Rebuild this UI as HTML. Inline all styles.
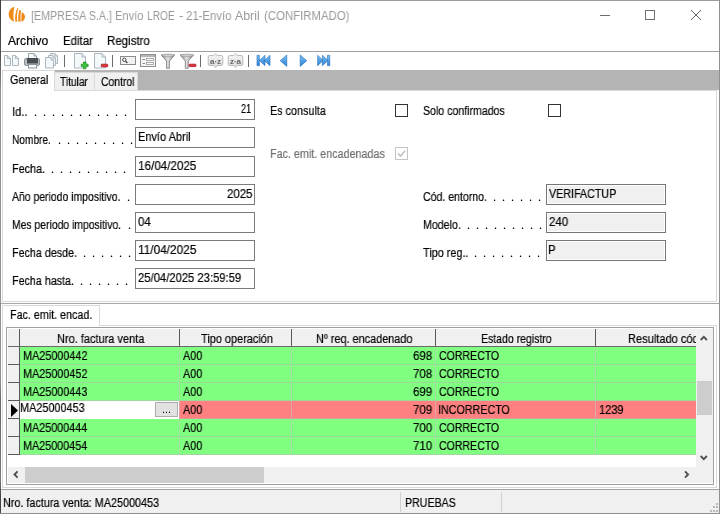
<!DOCTYPE html>
<html><head><meta charset="utf-8">
<style>
html,body{margin:0;padding:0;}
body{width:720px;height:514px;overflow:hidden;background:#fff;position:relative;font-family:"Liberation Sans",sans-serif;font-size:12.5px;color:#000;}
.a{position:absolute;}
.t{position:absolute;white-space:nowrap;transform-origin:0 0;line-height:16px;will-change:transform;-webkit-text-stroke:0.2px currentColor;}
</style></head><body>
<div class="a" style="left:0px;top:0px;width:720px;height:1px;background:#9b9b9b;"></div>
<div class="a" style="left:0px;top:0px;width:1px;height:514px;background:linear-gradient(#3c3c3c 0,#555 60px,#909090 90px,#909090 380px,#666 400px,#777 480px,#444 495px,#444 100%);"></div>
<div class="a" style="left:719px;top:0px;width:1px;height:514px;background:#8f8f8f;"></div>
<div class="a" style="left:0px;top:513px;width:720px;height:1px;background:#8f8f8f;"></div>
<svg class="a" style="left:6px;top:4px" width="22" height="20" viewBox="6 4 22 20">
<path d="M14.3 6.7 C10.4 8 8.5 11.5 8.7 14.8 C8.9 17.9 10.8 20.5 13.9 21.8 C13.2 17 13.3 11 14.3 6.7 Z" fill="#f08a16"/>
<path d="M17.5 7.7 C15.4 11.5 14.7 17 15.4 21.8 L17.3 21.6 C16.6 17 16.9 12 18.4 8.2 Z" fill="#f08a16"/>
<path d="M19.3 9.9 C18.2 13.5 18 18 18.4 21.8 L20.7 21.6 C20.4 18 20.5 13.5 21 10.2 Z" fill="#f08a16"/>
<path d="M21.9 11.9 C21.2 15 21.2 18.5 21.6 21.8 C23.6 20.9 25 19 25 16.8 C25 14.8 23.7 12.9 21.9 11.9 Z" fill="#f08a16"/>
</svg>
<div class="t" style="left:30.59px;top:8px;font-size:12px;transform:scaleX(0.8923);color:#999;-webkit-text-stroke:0;">[EMPRESA S.A.]</div>
<div class="t" style="left:115.08px;top:8px;font-size:12px;transform:scaleX(0.9247);color:#999;-webkit-text-stroke:0;">Envío</div>
<div class="t" style="left:147.45px;top:8px;font-size:12px;transform:scaleX(0.8462);color:#999;-webkit-text-stroke:0;">LROE</div>
<div class="t" style="left:178.65px;top:8px;font-size:12px;transform:scaleX(1.1000);color:#999;-webkit-text-stroke:0;">-</div>
<div class="t" style="left:186.13px;top:8px;font-size:12px;transform:scaleX(0.9489);color:#999;-webkit-text-stroke:0;">21-Envío</div>
<div class="t" style="left:235.30px;top:8px;font-size:12px;transform:scaleX(1.0302);color:#999;-webkit-text-stroke:0;">Abril</div>
<div class="t" style="left:263.54px;top:8px;font-size:12px;transform:scaleX(0.9492);color:#999;-webkit-text-stroke:0;">(CONFIRMADO)</div>
<div class="a" style="left:600px;top:15px;width:10px;height:1px;background:#6e6e6e;"></div>
<div class="a" style="left:645px;top:10px;width:10px;height:10px;border:1px solid #6e6e6e;box-sizing:border-box;"></div>
<svg class="a" style="left:690px;top:9px" width="12" height="12" viewBox="0 0 12 12"><path d="M1 1 L11 11 M11 1 L1 11" stroke="#666" stroke-width="1" fill="none"/></svg>
<div class="t" style="left:8.20px;top:33px;font-size:12px;transform:scaleX(1.0076);">Archivo</div>
<div class="t" style="left:63.25px;top:33px;font-size:12px;transform:scaleX(0.9536);">Editar</div>
<div class="t" style="left:106.84px;top:33px;font-size:12px;transform:scaleX(0.9583);">Registro</div>
<div class="a" style="left:1px;top:51px;width:718px;height:1px;background:#a0a0a0;"></div>
<svg class="a" style="left:0;top:52px;will-change:transform" width="340" height="18" viewBox="0 52 340 18"><defs><linearGradient id="gb" x1="0" y1="0" x2="0" y2="1"><stop offset="0" stop-color="#7cc2f6"/><stop offset="1" stop-color="#2a80d2"/></linearGradient><linearGradient id="gf" x1="0" y1="0" x2="1" y2="0"><stop offset="0" stop-color="#8a8a8a"/><stop offset=".5" stop-color="#e0e0e0"/><stop offset="1" stop-color="#808080"/></linearGradient><linearGradient id="gg" x1="0" y1="0" x2="0" y2="1"><stop offset="0" stop-color="#f6f6f6"/><stop offset="1" stop-color="#dcdcdc"/></linearGradient></defs><path d="M4.5 55.5 H7.5 L10.5 58.5 V65.5 H4.5 Z" fill="#f3f8fa" stroke="#acb7c0" stroke-width="1"/><path d="M7.5 55.5 V58.5 H10.5" fill="none" stroke="#acb7c0" stroke-width="1"/><path d="M12.5 55.5 H15.5 L18.5 58.5 V65.5 H12.5 Z" fill="#f3f8fa" stroke="#acb7c0" stroke-width="1"/><path d="M15.5 55.5 V58.5 H18.5" fill="none" stroke="#acb7c0" stroke-width="1"/><path d="M28.5 53.5 H34.0 L36.5 56.0 V59.5 H28.5 Z" fill="#f8fbfc" stroke="#9aa4ac" stroke-width="1"/><path d="M34.0 53.5 V56.0 H36.5" fill="none" stroke="#9aa4ac" stroke-width="1"/><rect x="24.5" y="58.5" width="15" height="7" rx="1.5" fill="#b9bec3" stroke="#8c9298"/><rect x="27" y="58" width="11" height="5.5" fill="#4a4d50"/><rect x="28.5" y="64.5" width="8" height="3.5" fill="#fbfdfe" stroke="#8c9298"/><path d="M50.5 53.5 H55.0 L57.5 56.0 V63.5 H50.5 Z" fill="#f3f8fa" stroke="#acb7c0" stroke-width="1"/><path d="M55.0 53.5 V56.0 H57.5" fill="none" stroke="#acb7c0" stroke-width="1"/><path d="M48.5 55.5 H53.0 L55.5 58.0 V65.5 H48.5 Z" fill="#f3f8fa" stroke="#acb7c0" stroke-width="1"/><path d="M53.0 55.5 V58.0 H55.5" fill="none" stroke="#acb7c0" stroke-width="1"/><path d="M45.5 57.5 H51.0 L53.5 60.0 V68.0 H45.5 Z" fill="#f3f8fa" stroke="#acb7c0" stroke-width="1"/><path d="M51.0 57.5 V60.0 H53.5" fill="none" stroke="#acb7c0" stroke-width="1"/><rect x="64" y="55" width="1" height="12" fill="#6e6e6e"/><rect x="112" y="55" width="1" height="12" fill="#6e6e6e"/><rect x="200" y="55" width="1" height="12" fill="#6e6e6e"/><rect x="248" y="55" width="1" height="12" fill="#6e6e6e"/><path d="M74.5 53.5 H82.0 L85.5 57.0 V68.0 H74.5 Z" fill="#f3f8fa" stroke="#acb7c0" stroke-width="1"/><path d="M82.0 53.5 V57.0 H85.5" fill="none" stroke="#acb7c0" stroke-width="1"/><path d="M83.5 62 h2.4 v2.2 h2.2 v2.4 h-2.2 v2.2 h-2.4 v-2.2 h-2.2 v-2.4 h2.2 z" fill="#3fc43f" stroke="#1f8f1f" stroke-width=".8"/><path d="M94.5 53.5 H102.0 L105.5 57.0 V68.0 H94.5 Z" fill="#f3f8fa" stroke="#acb7c0" stroke-width="1"/><path d="M102.0 53.5 V57.0 H105.5" fill="none" stroke="#acb7c0" stroke-width="1"/><rect x="101.2" y="64.2" width="6.6" height="2.6" rx=".8" fill="#e0343c" stroke="#a8141c" stroke-width=".8"/><rect x="120.5" y="56.5" width="15" height="8" fill="#f2f2f2" stroke="#8c8c8c"/><circle cx="124.3" cy="59.8" r="1.7" fill="#fff" stroke="#444" stroke-width="1"/><path d="M125.6 61.2 L127.4 63" stroke="#444" stroke-width="1.3"/><rect x="140.5" y="54.5" width="15" height="12" fill="#f4f4f4" stroke="#8f8f8f"/><rect x="141" y="55" width="14" height="2" fill="#b5b5b5"/><rect x="146.5" y="58.5" width="7" height="2" fill="#fff" stroke="#9a9a9a" stroke-width=".8"/><rect x="146.5" y="62.5" width="7" height="2" fill="#fff" stroke="#9a9a9a" stroke-width=".8"/><rect x="142.5" y="59" width="2.5" height="1" fill="#8a8a8a"/><rect x="142.5" y="63" width="2.5" height="1" fill="#8a8a8a"/><path d="M161.2 55 H174.7 L169.39999999999998 61 V68.3 H166.5 V61 Z" fill="url(#gf)" stroke="#7a7a7a" stroke-width=".8"/><ellipse cx="167.95" cy="55.2" rx="6.6" ry="1.1" fill="#d8d8d8" stroke="#8a8a8a" stroke-width=".6"/><path d="M180 55 H193.5 L188.2 61 V68.3 H185.3 V61 Z" fill="url(#gf)" stroke="#7a7a7a" stroke-width=".8"/><ellipse cx="186.75" cy="55.2" rx="6.6" ry="1.1" fill="#d8d8d8" stroke="#8a8a8a" stroke-width=".6"/><rect x="189" y="64.2" width="7" height="2.4" rx=".8" fill="#e0343c" stroke="#a8141c" stroke-width=".8"/><path d="M209.7 55.5 H213.7 L215.5 53.8 L217.3 55.5 H221.29999999999998 Q222.79999999999998 55.5 222.79999999999998 57 V64 Q222.79999999999998 65.5 221.29999999999998 65.5 H217.3 L215.5 67.4 L213.7 65.5 H209.7 Q208.2 65.5 208.2 64 V57 Q208.2 55.5 209.7 55.5 Z" fill="url(#gg)" stroke="#b4b4b4" stroke-width=".9"/><text x="215.5" y="63.6" font-family="Liberation Sans, sans-serif" font-size="8" font-weight="bold" fill="#666" text-anchor="middle">a·z</text><path d="M229.7 55.5 H233.7 L235.5 53.8 L237.3 55.5 H241.29999999999998 Q242.79999999999998 55.5 242.79999999999998 57 V64 Q242.79999999999998 65.5 241.29999999999998 65.5 H237.3 L235.5 67.4 L233.7 65.5 H229.7 Q228.2 65.5 228.2 64 V57 Q228.2 55.5 229.7 55.5 Z" fill="url(#gg)" stroke="#b4b4b4" stroke-width=".9"/><text x="235.5" y="63.6" font-family="Liberation Sans, sans-serif" font-size="8" font-weight="bold" fill="#666" text-anchor="middle">z·a</text><rect x="257" y="55.3" width="2.4" height="10.4" fill="url(#gb)" stroke="#2a70bc" stroke-width=".6" stroke-linejoin="round"/><path d="M265 55.3 V65.7 L259.4 60.5 Z" fill="url(#gb)" stroke="#2a70bc" stroke-width=".6" stroke-linejoin="round"/><path d="M270 55.3 V65.7 L264.4 60.5 Z" fill="url(#gb)" stroke="#2a70bc" stroke-width=".6" stroke-linejoin="round"/><path d="M286.8 55 V66.4 L280.2 60.7 Z" fill="url(#gb)" stroke="#2a70bc" stroke-width=".6" stroke-linejoin="round"/><path d="M300.2 55 V66.4 L306.8 60.7 Z" fill="url(#gb)" stroke="#2a70bc" stroke-width=".6" stroke-linejoin="round"/><path d="M317.6 55.3 V65.7 L323.2 60.5 Z" fill="url(#gb)" stroke="#2a70bc" stroke-width=".6" stroke-linejoin="round"/><path d="M322.4 55.3 V65.7 L328 60.5 Z" fill="url(#gb)" stroke="#2a70bc" stroke-width=".6" stroke-linejoin="round"/><rect x="327.4" y="55.3" width="2.4" height="10.4" fill="url(#gb)" stroke="#2a70bc" stroke-width=".6" stroke-linejoin="round"/></svg>
<div class="a" style="left:138px;top:70px;width:581px;height:20px;background:#b4b4b4;"></div>
<div class="a" style="left:55px;top:70px;width:83px;height:2px;background:#b4b4b4;"></div>
<div class="a" style="left:55px;top:72px;width:83px;height:18px;background:#f0f0f0;border-top:1px solid #d9d9d9;box-sizing:border-box;"></div>
<div class="a" style="left:94px;top:72px;width:1px;height:18px;background:#d9d9d9;"></div>
<div class="a" style="left:137px;top:72px;width:1px;height:18px;background:#d9d9d9;"></div>
<div class="a" style="left:2px;top:70px;width:53px;height:21px;background:#fff;border:1px solid #d9d9d9;box-sizing:border-box;border-bottom:none;"></div>
<div class="t" style="left:9.88px;top:72px;font-size:12.5px;transform:scaleX(0.8608);">General</div>
<div class="t" style="left:60.16px;top:74px;font-size:12.5px;transform:scaleX(0.8136);">Titular</div>
<div class="t" style="left:101.20px;top:74px;font-size:12.5px;transform:scaleX(0.8303);">Control</div>
<div class="a" style="left:2px;top:90px;width:715px;height:212px;border:1px solid #d9d9d9;box-sizing:border-box;border-top:none;"></div>
<div class="a" style="left:55px;top:90px;width:662px;height:1px;background:#d9d9d9;"></div>
<div class="t" style="left:11.62px;top:104px;font-size:12.5px;transform:scaleX(0.8874);">Id..</div>
<div class="t" style="left:33.75px;top:104px;font-size:11px;letter-spacing:5.944px;">...........</div>
<div class="a" style="left:135px;top:99px;width:120px;height:21px;background:#fff;border:1px solid #7a7a7a;box-sizing:border-box;"></div>
<div class="t" style="left:240.66px;top:101px;font-size:12.5px;transform:scaleX(0.7266);">21</div>
<div class="t" style="left:11.59px;top:132px;font-size:12.5px;transform:scaleX(0.8100);">Nombre.</div>
<div class="t" style="left:57.75px;top:132px;font-size:11px;letter-spacing:5.944px;">.........</div>
<div class="a" style="left:135px;top:127px;width:120px;height:21px;background:#fff;border:1px solid #7a7a7a;box-sizing:border-box;"></div>
<div class="t" style="left:138.02px;top:129px;font-size:12.5px;transform:scaleX(0.8810);">Envío Abril</div>
<div class="t" style="left:11.73px;top:161px;font-size:12.5px;transform:scaleX(0.8667);">Fecha.</div>
<div class="t" style="left:50.75px;top:161px;font-size:11px;letter-spacing:5.944px;">.........</div>
<div class="a" style="left:135px;top:156px;width:120px;height:21px;background:#fff;border:1px solid #7a7a7a;box-sizing:border-box;"></div>
<div class="t" style="left:138.06px;top:158px;font-size:12.5px;transform:scaleX(0.9329);">16/04/2025</div>
<div class="t" style="left:11.90px;top:189px;font-size:12.5px;transform:scaleX(0.8346);">Año periodo impositivo.</div>
<div class="t" style="left:127.05px;top:189px;font-size:11px;letter-spacing:5.944px;">.</div>
<div class="a" style="left:135px;top:184px;width:120px;height:21px;background:#fff;border:1px solid #7a7a7a;box-sizing:border-box;"></div>
<div class="t" style="left:227.22px;top:186px;font-size:12.5px;transform:scaleX(0.9150);">2025</div>
<div class="t" style="left:11.57px;top:217px;font-size:12.5px;transform:scaleX(0.8304);">Mes periodo impositivo.</div>
<div class="t" style="left:127.65px;top:217px;font-size:11px;letter-spacing:5.944px;">.</div>
<div class="a" style="left:135px;top:212px;width:120px;height:21px;background:#fff;border:1px solid #7a7a7a;box-sizing:border-box;"></div>
<div class="t" style="left:138.44px;top:214px;font-size:12.5px;transform:scaleX(0.9150);">04</div>
<div class="t" style="left:11.74px;top:245px;font-size:12.5px;transform:scaleX(0.8587);">Fecha desde.</div>
<div class="t" style="left:82.85px;top:245px;font-size:11px;letter-spacing:5.944px;">......</div>
<div class="a" style="left:135px;top:240px;width:120px;height:21px;background:#fff;border:1px solid #7a7a7a;box-sizing:border-box;"></div>
<div class="t" style="left:138.05px;top:242px;font-size:12.5px;transform:scaleX(0.9468);">11/04/2025</div>
<div class="t" style="left:11.74px;top:273px;font-size:12.5px;transform:scaleX(0.8573);">Fecha hasta.</div>
<div class="t" style="left:79.65px;top:273px;font-size:11px;letter-spacing:5.944px;">......</div>
<div class="a" style="left:135px;top:268px;width:120px;height:21px;background:#fff;border:1px solid #7a7a7a;box-sizing:border-box;"></div>
<div class="t" style="left:138.36px;top:270px;font-size:12.5px;transform:scaleX(0.8996);">25/04/2025 23:59:59</div>
<div class="t" style="left:270.14px;top:103px;font-size:12.5px;transform:scaleX(0.8634);">Es consulta</div>
<div class="a" style="left:395px;top:104px;width:13px;height:13px;background:#fff;border:1px solid #333;box-sizing:border-box;"></div>
<div class="t" style="left:422.79px;top:103px;font-size:12.5px;transform:scaleX(0.8471);">Solo confirmados</div>
<div class="a" style="left:548px;top:104px;width:13px;height:13px;background:#fff;border:1px solid #333;box-sizing:border-box;"></div>
<div class="t" style="left:270.14px;top:146px;font-size:12.5px;transform:scaleX(0.8606);color:#707070;">Fac. emit. encadenadas</div>
<div class="a" style="left:395px;top:147px;width:13px;height:13px;background:#fff;border:1px solid #c4c4c4;box-sizing:border-box;"></div>
<svg class="a" style="left:395px;top:147px" width="13" height="13" viewBox="0 0 13 13"><path d="M3 6.5 L5.5 9.2 L10.2 3.6" stroke="#bcbcbc" stroke-width="1.4" fill="none"/></svg>
<div class="t" style="left:422.79px;top:189px;font-size:12.5px;transform:scaleX(0.8446);">Cód. entorno.</div>
<div class="t" style="left:493.05px;top:189px;font-size:11px;letter-spacing:5.944px;">......</div>
<div class="a" style="left:546px;top:184px;width:120px;height:21px;background:#f0f0f0;border:1px solid #767676;box-sizing:border-box;box-shadow:inset 0 0 0 1px #fff;"></div>
<div class="t" style="left:549.11px;top:186px;font-size:12.5px;transform:scaleX(0.8571);">VERIFACTUP</div>
<div class="t" style="left:423.35px;top:217px;font-size:12.5px;transform:scaleX(0.8511);">Modelo.</div>
<div class="t" style="left:466.55px;top:217px;font-size:11px;letter-spacing:5.944px;">.........</div>
<div class="a" style="left:546px;top:212px;width:120px;height:21px;background:#f0f0f0;border:1px solid #767676;box-sizing:border-box;box-shadow:inset 0 0 0 1px #fff;"></div>
<div class="t" style="left:548.65px;top:214px;font-size:12.5px;transform:scaleX(0.9150);">240</div>
<div class="t" style="left:423.04px;top:245px;font-size:12.5px;transform:scaleX(0.8684);">Tipo reg..</div>
<div class="t" style="left:473.85px;top:245px;font-size:11px;letter-spacing:5.944px;">........</div>
<div class="a" style="left:546px;top:240px;width:120px;height:21px;background:#f0f0f0;border:1px solid #767676;box-sizing:border-box;box-shadow:inset 0 0 0 1px #fff;"></div>
<div class="t" style="left:548.29px;top:242px;font-size:12.5px;transform:scaleX(0.9150);">P</div>
<div class="a" style="left:1px;top:303px;width:718px;height:1px;background:#a8a8a8;"></div>
<div class="a" style="left:2px;top:325px;width:715px;height:163px;border:1px solid #d9d9d9;box-sizing:border-box;"></div>
<div class="a" style="left:2px;top:305px;width:98px;height:21px;background:#fff;border:1px solid #d9d9d9;box-sizing:border-box;border-bottom:none;"></div>
<div class="t" style="left:9.94px;top:307px;font-size:12.5px;transform:scaleX(0.8581);">Fac. emit. encad.</div>
<div class="a" style="left:6px;top:327px;width:708px;height:158px;background:#fff;border:1px solid #a0a0a0;box-sizing:border-box;"></div>
<div class="a" style="left:8px;top:329px;width:688px;height:17px;background:#f0f0f0;"></div>
<div class="a" style="left:8px;top:346px;width:688px;height:1px;background:#6a6a6a;"></div>
<div class="a" style="left:8px;top:347px;width:11px;height:108px;background:#f0f0f0;"></div>
<div class="a" style="left:19px;top:329px;width:1px;height:126px;background:#5a5a5a;"></div>
<div class="a" style="left:20px;top:347px;width:676px;height:17px;background:#80ff80;"></div>
<div class="a" style="left:20px;top:364px;width:676px;height:1px;background:#9cd89c;"></div>
<div class="a" style="left:8px;top:364px;width:11px;height:1px;background:#5a5a5a;"></div>
<div class="a" style="left:179px;top:347px;width:1px;height:18px;background:#a4dca4;"></div>
<div class="a" style="left:291px;top:347px;width:1px;height:18px;background:#a4dca4;"></div>
<div class="a" style="left:435px;top:347px;width:1px;height:18px;background:#a4dca4;"></div>
<div class="a" style="left:595px;top:347px;width:1px;height:18px;background:#a4dca4;"></div>
<div class="t" style="left:22.83px;top:348px;font-size:12.5px;transform:scaleX(0.8666);">MA25000442</div>
<div class="t" style="left:183.00px;top:348px;font-size:12.5px;transform:scaleX(0.8716);">A00</div>
<div class="t" style="left:412.83px;top:348px;font-size:12.5px;transform:scaleX(0.9150);">698</div>
<div class="t" style="left:438.79px;top:348px;font-size:12.5px;transform:scaleX(0.8445);">CORRECTO</div>
<div class="a" style="left:20px;top:365px;width:676px;height:17px;background:#80ff80;"></div>
<div class="a" style="left:20px;top:382px;width:676px;height:1px;background:#9cd89c;"></div>
<div class="a" style="left:8px;top:382px;width:11px;height:1px;background:#5a5a5a;"></div>
<div class="a" style="left:179px;top:365px;width:1px;height:18px;background:#a4dca4;"></div>
<div class="a" style="left:291px;top:365px;width:1px;height:18px;background:#a4dca4;"></div>
<div class="a" style="left:435px;top:365px;width:1px;height:18px;background:#a4dca4;"></div>
<div class="a" style="left:595px;top:365px;width:1px;height:18px;background:#a4dca4;"></div>
<div class="t" style="left:22.83px;top:366px;font-size:12.5px;transform:scaleX(0.8666);">MA25000452</div>
<div class="t" style="left:183.00px;top:366px;font-size:12.5px;transform:scaleX(0.8716);">A00</div>
<div class="t" style="left:412.83px;top:366px;font-size:12.5px;transform:scaleX(0.9150);">708</div>
<div class="t" style="left:438.79px;top:366px;font-size:12.5px;transform:scaleX(0.8445);">CORRECTO</div>
<div class="a" style="left:20px;top:383px;width:676px;height:17px;background:#80ff80;"></div>
<div class="a" style="left:20px;top:400px;width:676px;height:1px;background:#9cd89c;"></div>
<div class="a" style="left:8px;top:400px;width:11px;height:1px;background:#5a5a5a;"></div>
<div class="a" style="left:179px;top:383px;width:1px;height:18px;background:#a4dca4;"></div>
<div class="a" style="left:291px;top:383px;width:1px;height:18px;background:#a4dca4;"></div>
<div class="a" style="left:435px;top:383px;width:1px;height:18px;background:#a4dca4;"></div>
<div class="a" style="left:595px;top:383px;width:1px;height:18px;background:#a4dca4;"></div>
<div class="t" style="left:22.83px;top:384px;font-size:12.5px;transform:scaleX(0.8654);">MA25000443</div>
<div class="t" style="left:183.00px;top:384px;font-size:12.5px;transform:scaleX(0.8716);">A00</div>
<div class="t" style="left:412.83px;top:384px;font-size:12.5px;transform:scaleX(0.9150);">699</div>
<div class="t" style="left:438.79px;top:384px;font-size:12.5px;transform:scaleX(0.8445);">CORRECTO</div>
<div class="a" style="left:20px;top:401px;width:676px;height:17px;background:#ff8080;"></div>
<div class="a" style="left:20px;top:418px;width:676px;height:1px;background:#dc9c9c;"></div>
<div class="a" style="left:8px;top:418px;width:11px;height:1px;background:#5a5a5a;"></div>
<div class="a" style="left:179px;top:401px;width:1px;height:18px;background:#e0a4a4;"></div>
<div class="a" style="left:291px;top:401px;width:1px;height:18px;background:#e0a4a4;"></div>
<div class="a" style="left:435px;top:401px;width:1px;height:18px;background:#e0a4a4;"></div>
<div class="a" style="left:595px;top:401px;width:1px;height:18px;background:#e0a4a4;"></div>
<div class="a" style="left:20px;top:401px;width:159px;height:18px;background:#fff;"></div>
<div class="t" style="left:20.03px;top:400px;font-size:12.5px;transform:scaleX(0.8695);">MA25000453</div>
<div class="a" style="left:155px;top:402px;width:23px;height:15px;background:#e1e1e1;border:1px solid #adadad;box-sizing:border-box;"></div>
<div class="t" style="left:162.05px;top:402px;font-size:10px;transform:scaleX(1.0606);-webkit-text-stroke:0;">...</div>
<svg class="a" style="left:10px;top:403px" width="9" height="15" viewBox="0 0 9 15"><path d="M1 1 L8 7.5 L1 14 Z" fill="#000"/></svg>
<div class="t" style="left:183.00px;top:402px;font-size:12.5px;transform:scaleX(0.8716);">A00</div>
<div class="t" style="left:412.83px;top:402px;font-size:12.5px;transform:scaleX(0.9150);">709</div>
<div class="t" style="left:438.36px;top:402px;font-size:12.5px;transform:scaleX(0.8575);">INCORRECTO</div>
<div class="t" style="left:599.21px;top:402px;font-size:12.5px;transform:scaleX(0.8826);">1239</div>
<div class="a" style="left:20px;top:419px;width:676px;height:17px;background:#80ff80;"></div>
<div class="a" style="left:20px;top:436px;width:676px;height:1px;background:#9cd89c;"></div>
<div class="a" style="left:8px;top:436px;width:11px;height:1px;background:#5a5a5a;"></div>
<div class="a" style="left:179px;top:419px;width:1px;height:18px;background:#a4dca4;"></div>
<div class="a" style="left:291px;top:419px;width:1px;height:18px;background:#a4dca4;"></div>
<div class="a" style="left:435px;top:419px;width:1px;height:18px;background:#a4dca4;"></div>
<div class="a" style="left:595px;top:419px;width:1px;height:18px;background:#a4dca4;"></div>
<div class="t" style="left:22.84px;top:420px;font-size:12.5px;transform:scaleX(0.8630);">MA25000444</div>
<div class="t" style="left:183.00px;top:420px;font-size:12.5px;transform:scaleX(0.8716);">A00</div>
<div class="t" style="left:412.73px;top:420px;font-size:12.5px;transform:scaleX(0.9150);">700</div>
<div class="t" style="left:438.79px;top:420px;font-size:12.5px;transform:scaleX(0.8445);">CORRECTO</div>
<div class="a" style="left:20px;top:437px;width:676px;height:17px;background:#80ff80;"></div>
<div class="a" style="left:20px;top:454px;width:676px;height:1px;background:#9cd89c;"></div>
<div class="a" style="left:8px;top:454px;width:11px;height:1px;background:#5a5a5a;"></div>
<div class="a" style="left:179px;top:437px;width:1px;height:18px;background:#a4dca4;"></div>
<div class="a" style="left:291px;top:437px;width:1px;height:18px;background:#a4dca4;"></div>
<div class="a" style="left:435px;top:437px;width:1px;height:18px;background:#a4dca4;"></div>
<div class="a" style="left:595px;top:437px;width:1px;height:18px;background:#a4dca4;"></div>
<div class="t" style="left:22.84px;top:438px;font-size:12.5px;transform:scaleX(0.8630);">MA25000454</div>
<div class="t" style="left:183.00px;top:438px;font-size:12.5px;transform:scaleX(0.8716);">A00</div>
<div class="t" style="left:412.73px;top:438px;font-size:12.5px;transform:scaleX(0.9150);">710</div>
<div class="t" style="left:438.79px;top:438px;font-size:12.5px;transform:scaleX(0.8445);">CORRECTO</div>
<div class="a" style="left:179px;top:329px;width:1px;height:17px;background:#5a5a5a;"></div>
<div class="a" style="left:291px;top:329px;width:1px;height:17px;background:#5a5a5a;"></div>
<div class="a" style="left:435px;top:329px;width:1px;height:17px;background:#5a5a5a;"></div>
<div class="a" style="left:595px;top:329px;width:1px;height:17px;background:#5a5a5a;"></div>
<div class="t" style="left:56.62px;top:331px;font-size:12.5px;transform:scaleX(0.8791);">Nro. factura venta</div>
<div class="t" style="left:200.74px;top:331px;font-size:12.5px;transform:scaleX(0.8744);">Tipo operación</div>
<div class="t" style="left:316.13px;top:331px;font-size:12.5px;transform:scaleX(0.8692);">Nº req. encadenado</div>
<div class="t" style="left:480.66px;top:331px;font-size:12.5px;transform:scaleX(0.8400);">Estado registro</div>
<div class="a" style="left:596px;top:328px;width:100px;height:18px;overflow:hidden">
<div class="t" style="left:31.62px;top:3px;font-size:12.5px;transform:scaleX(0.8842);">Resultado código</div>
</div>
<div class="a" style="left:696px;top:329px;width:17px;height:138px;background:#f0f0f0;"></div>
<div class="a" style="left:697px;top:381px;width:15px;height:34px;background:#cdcdcd;"></div>
<svg class="a" style="left:698px;top:333px" width="12" height="10" viewBox="698 333 12 10"><path d="M700.7 340 L703.8 336.9 L706.9 340" stroke="#505050" stroke-width="1.9" fill="none"/></svg>
<svg class="a" style="left:698px;top:452px" width="12" height="10" viewBox="698 452 12 10"><path d="M700.7 456 L703.8 459.1 L706.9 456" stroke="#505050" stroke-width="1.9" fill="none"/></svg>
<div class="a" style="left:8px;top:467px;width:705px;height:16px;background:#f0f0f0;"></div>
<div class="a" style="left:25px;top:467px;width:239px;height:16px;background:#cdcdcd;"></div>
<svg class="a" style="left:10px;top:468px" width="12" height="13" viewBox="10 468 12 13"><path d="M17.6 471.4 L14.5 474.5 L17.6 477.6" stroke="#505050" stroke-width="1.9" fill="none"/></svg>
<svg class="a" style="left:680px;top:468px" width="12" height="13" viewBox="680 468 12 13"><path d="M685 471.4 L688.1 474.5 L685 477.6" stroke="#505050" stroke-width="1.9" fill="none"/></svg>
<div class="a" style="left:1px;top:489px;width:718px;height:1px;background:#a0a0a0;"></div>
<div class="a" style="left:1px;top:490px;width:718px;height:23px;background:#f0f0f0;"></div>
<div class="a" style="left:400px;top:492px;width:1px;height:20px;background:#d0d0d0;"></div>
<div class="a" style="left:501px;top:492px;width:1px;height:20px;background:#d0d0d0;"></div>
<div class="t" style="left:3.44px;top:495px;font-size:12.5px;transform:scaleX(0.8638);">Nro. factura venta: MA25000453</div>
<div class="t" style="left:404.65px;top:495px;font-size:12.5px;transform:scaleX(0.8505);">PRUEBAS</div>
<div class="a" style="left:716px;top:503px;width:2px;height:2px;background:#b8b8b8;"></div>
<div class="a" style="left:713px;top:506px;width:2px;height:2px;background:#b8b8b8;"></div>
<div class="a" style="left:716px;top:506px;width:2px;height:2px;background:#b8b8b8;"></div>
<div class="a" style="left:710px;top:510px;width:2px;height:2px;background:#b8b8b8;"></div>
<div class="a" style="left:713px;top:510px;width:2px;height:2px;background:#b8b8b8;"></div>
<div class="a" style="left:716px;top:510px;width:2px;height:2px;background:#b8b8b8;"></div>
</body></html>
